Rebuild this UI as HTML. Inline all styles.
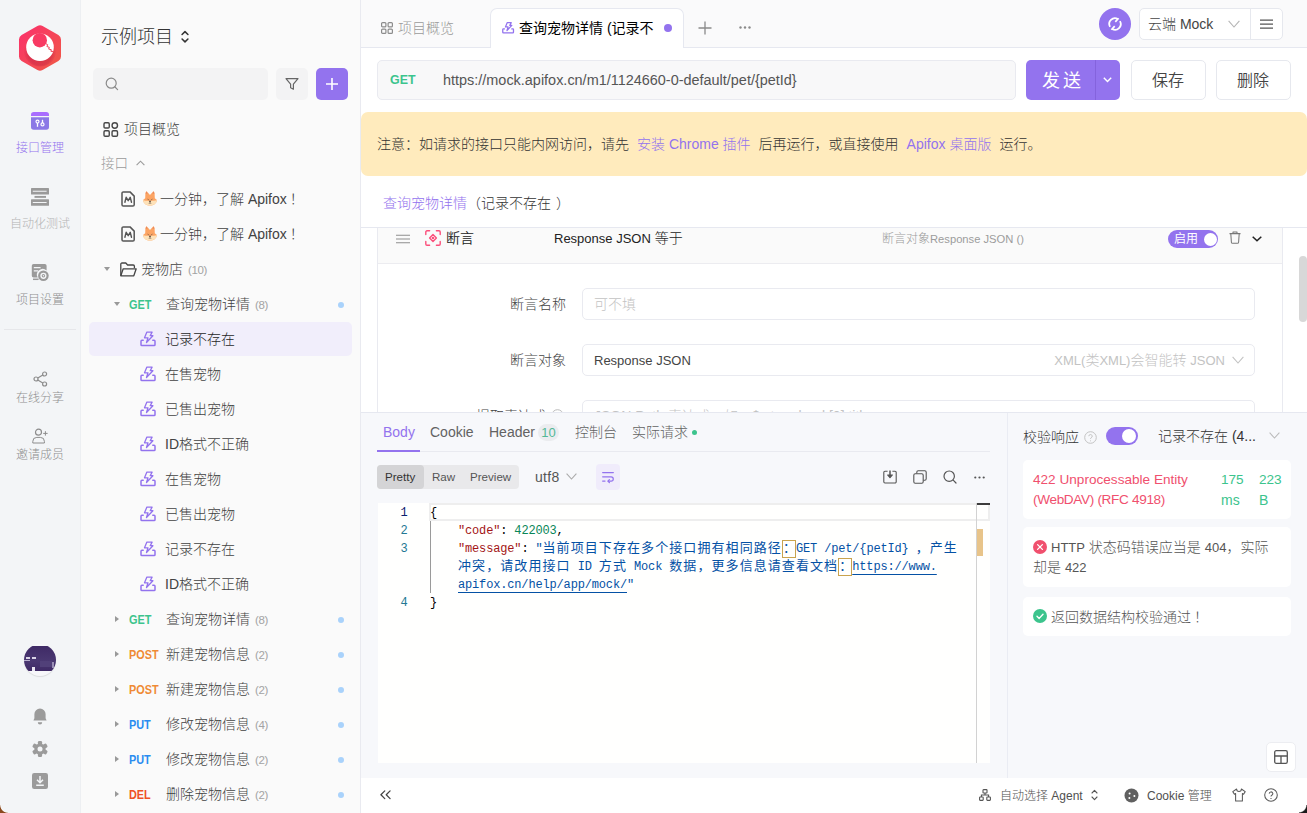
<!DOCTYPE html>
<html lang="zh-CN">
<head>
<meta charset="utf-8">
<title>Apifox - 示例项目</title>
<style>
*{box-sizing:border-box;margin:0;padding:0}
html,body{width:1307px;height:813px;overflow:hidden}
body{position:relative;background:#fff;font-family:"Liberation Sans","Noto Sans CJK SC",sans-serif;font-size:14px;font-weight:300;color:#333}
.abs{position:absolute}
.l{font-size:13px}
svg{display:block;overflow:visible}
.t{position:absolute;white-space:nowrap;line-height:20px;height:20px}
/* rail */
#rail{position:absolute;left:0;top:0;width:80px;height:813px;background:#f3f5f7}
#rail .lb{position:absolute;left:0;width:80px;text-align:center;font-size:12px;line-height:16px;color:#a9a9a9;white-space:nowrap}
#rail .ic{position:absolute}
/* sidebar */
#side{position:absolute;left:80px;top:0;width:280px;height:813px;background:#fafafa;border-left:1px solid #edeff2}
#side .row{position:absolute;left:0;width:280px;height:35px}
#side .row .t{top:7px;font-size:14px;color:#424242}
.cnt{font-size:11.500px;letter-spacing:-.4px;color:#a3a3a3;margin-left:5px}
.m{position:absolute;top:8px;left:48px;font-size:12.500px;font-weight:bold;line-height:20px;transform:scaleX(.87);transform-origin:0 50%}
.get{color:#3cc48d}.post{color:#ef8a35}.put{color:#2a8cf0}.del{color:#ef5126}
.dot{position:absolute;left:257px;top:15px;width:6px;height:6px;border-radius:50%;background:#a9d2fb}
.car{position:absolute;top:14px;width:0;height:0}
.car.r{left:34px;top:14px;border-left:4.500px solid #999;border-top:3.500px solid transparent;border-bottom:3.500px solid transparent}
.car.d{left:33px;top:15px;border-top:4.500px solid #999;border-left:3.500px solid transparent;border-right:3.500px solid transparent}
.ci{position:absolute;left:59px;top:8px}

.tb{top:422px;font-size:14px;color:#626262}
.sg{top:467px;font-size:11.600px;color:#555}
.ft{top:786px;font-size:12px;color:#505050}
.card{left:662px;width:268px;background:#fff;border-radius:5px}
#ed{font-family:"Liberation Mono","Noto Sans CJK SC",monospace;font-size:12px;font-weight:400;letter-spacing:-.16px;color:#000}
#ed .ln{margin-top:1px;position:absolute;left:0;width:29.500px;text-align:right;line-height:18px;height:18px;color:#237893}
#ed .cl{position:absolute;left:52px;line-height:18px;height:18px;white-space:pre;margin-top:1px}
#ed .k{color:#a31515}#ed .n{color:#098658}#ed .s{color:#0451a5}
#ed b{font-weight:400;font-size:13px;letter-spacing:1.080px}
#ed b.bx{display:inline-block;width:14.080px;height:18px;letter-spacing:0;border:1px solid #c9a34e;vertical-align:top;line-height:16px}
#ed u{text-decoration:underline;text-underline-offset:4px}
</style>
</head>
<body>
<div id="rail">
  <svg class="ic" style="left:17px;top:23px" width="46" height="50" viewBox="0 0 46 50">
    <defs>
      <linearGradient id="lg" x1="0" y1="0" x2="1" y2="1"><stop offset="0" stop-color="#fb2f6d"/><stop offset="1" stop-color="#ef5a45"/></linearGradient>
      <radialGradient id="sh" cx="0.5" cy="0.6" r="0.5"><stop offset="0.7" stop-color="#c0203f" stop-opacity=".45"/><stop offset="1" stop-color="#c0203f" stop-opacity="0"/></radialGradient>
    </defs>
    <path d="M20.4 2.9 a5.2 5.2 0 0 1 5.2 0 l15.8 9.1 a5.2 5.2 0 0 1 2.6 4.5 v17 a5.2 5.2 0 0 1 -2.6 4.5 l-15.8 9.1 a5.2 5.2 0 0 1 -5.2 0 l-15.8 -9.1 a5.2 5.2 0 0 1 -2.6 -4.5 v-17 a5.2 5.2 0 0 1 2.6 -4.5 z" fill="url(#lg)"/>
    <circle cx="23" cy="27" r="16.5" fill="url(#sh)"/>
    <circle cx="23" cy="24.2" r="13.8" fill="#fff"/>
    <circle cx="22.800" cy="17.200" r="7.200" fill="#f83a63"/>
    <path d="M28.500 20.500l2.200 1.200-.8 1.800 2.400.8-.6 1.800 2.600.6-.4 1.600 2.400.2" stroke="#f3445a" stroke-width="1" fill="none"/>
  </svg>
  <!-- api mgmt -->
  <svg class="ic" style="left:31px;top:112px" width="18" height="18" viewBox="0 0 18 18">
    <path d="M0 4v-1.200a2.800 2.800 0 0 1 2.800-2.800h12.400a2.800 2.800 0 0 1 2.800 2.800v1.200z" fill="#a96dff"/>
    <path d="M0 5.200h18v9.800a2.800 2.800 0 0 1-2.800 2.800h-12.400a2.800 2.800 0 0 1-2.800-2.800z" fill="#8b78e6"/>
    <circle cx="6.500" cy="9.600" r="1.500" fill="none" stroke="#fff" stroke-width="1.200"/><path d="M6.500 11v3.800" stroke="#fff" stroke-width="1.300"/>
    <circle cx="11.500" cy="12.400" r="1.500" fill="none" stroke="#fff" stroke-width="1.200"/><path d="M11.500 11v-3.200" stroke="#fff" stroke-width="1.300"/>
  </svg>
  <div class="lb" style="top:140px;color:#9373ee">接口管理</div>
  <!-- automation -->
  <svg class="ic" style="left:31px;top:188px" width="18" height="18" viewBox="0 0 18 18">
    <rect x="0" y="0" width="18" height="6.600" rx=".6" fill="#9a9a9a"/><rect x="0" y="11.200" width="18" height="6.600" rx=".6" fill="#9a9a9a"/>
    <path d="M1.800 3.300h13.800M1.800 14.500h13.800" stroke="#f3f5f7" stroke-width="1.100"/><path d="M3.500 8.900h11.500" stroke="#9a9a9a" stroke-width="1.900"/>
  </svg>
  <div class="lb" style="top:216px;color:#b4b4b4">自动化测试</div>
  <!-- settings -->
  <svg class="ic" style="left:31px;top:264px" width="18" height="18" viewBox="0 0 18 18">
    <path d="M2.600 0h11.200a1.800 1.800 0 0 1 1.800 1.800v4.600a5.800 5.800 0 0 0-8.900 7.200H2.600a1.800 1.800 0 0 1-1.800-1.800v-10a1.800 1.800 0 0 1 1.800-1.800z" fill="#9a9a9a"/>
    <path d="M2.800 3.600h6.800M2.800 6.800h4.400" stroke="#f3f5f7" stroke-width="1.300"/><path d="M2 15.300h5.600" stroke="#9a9a9a" stroke-width="1.500"/>
    <circle cx="12.400" cy="11.800" r="5.300" fill="#9a9a9a"/><circle cx="12.400" cy="11.800" r="3.100" fill="#f3f5f7"/><circle cx="12.400" cy="11.800" r="1.700" fill="#9a9a9a"/><circle cx="12.400" cy="11.800" r=".7" fill="#f3f5f7"/>
  </svg>
  <div class="lb" style="top:292px;color:#8f8f8f">项目设置</div>
  <div class="abs" style="left:4px;top:329px;width:72px;height:1px;background:#e6e7ea"></div>
  <!-- share -->
  <svg class="ic" style="left:33px;top:371px" width="15" height="16" viewBox="0 0 15 16" fill="none" stroke="#8c8c8c" stroke-width="1.2">
    <circle cx="11.6" cy="3" r="2"/><circle cx="3" cy="8" r="2"/><circle cx="11.6" cy="13" r="2"/><path d="M4.8 7 9.8 4 M4.8 9 9.8 12"/>
  </svg>
  <div class="lb" style="top:390px;color:#8f8f8f">在线分享</div>
  <!-- invite -->
  <svg class="ic" style="left:32px;top:428px" width="17" height="16" viewBox="0 0 17 16" fill="none" stroke="#8c8c8c" stroke-width="1.2">
    <circle cx="6.5" cy="4.2" r="3"/><path d="M0.8 15v-1.6a4 4 0 0 1 4-4h3.6a4 4 0 0 1 4 4V15z M13.400 3.200v4.400M11.200 5.400h4.400" stroke-width="1"/>
  </svg>
  <div class="lb" style="top:447px;color:#8f8f8f">邀请成员</div>
  <!-- avatar -->
  <div class="abs" style="left:24px;top:644px;width:32px;height:32px;border-radius:50%;overflow:hidden;background:#f7f7fa;box-shadow:0 1px 1px rgba(0,0,0,.10)">
    <div class="abs" style="left:0;top:2px;width:32px;height:25px;background:linear-gradient(#3f2a66,#4a3872 60%,#3f2a66)"></div>
    <div class="abs" style="left:2px;top:13px;width:4px;height:2px;background:#d9d3e6"></div>
    <div class="abs" style="left:8px;top:13px;width:4px;height:2px;background:#d9d3e6"></div>
    <div class="abs" style="left:0;top:16px;width:6px;height:1px;background:#b9b0cf"></div>
    <div class="abs" style="left:8px;top:23px;width:3px;height:4px;background:#e9e6f0"></div>
    <div class="abs" style="left:28px;top:18px;width:2px;height:6px;background:#9a8fb6"></div>
    <div class="abs" style="left:16px;top:17px;width:12px;height:6px;background:#514079"></div>
  </div>
  <!-- bell -->
  <svg class="ic" style="left:33px;top:708px" width="14" height="17" viewBox="0 0 14 17">
    <path d="M7 0.5a5.6 5.6 0 0 1 5.6 5.6v4.2l1 2.200H0.400l1-2.200V6.100A5.600 5.600 0 0 1 7 .5z" fill="#9b9b9b"/><path d="M4.800 14.200h4.400a2.200 2.200 0 0 1-4.400 0z" fill="#9b9b9b"/>
  </svg>
  <!-- gear -->
  <svg class="ic" style="left:32px;top:741px" width="16" height="16" viewBox="-8 -8 16 16" fill="#9b9b9b">
    <circle r="5.600"/><g><rect x="-2.100" y="-8" width="4.200" height="5" rx="1.300"/><rect x="-2.100" y="3" width="4.200" height="5" rx="1.300"/></g><g transform="rotate(60)"><rect x="-2.100" y="-8" width="4.200" height="5" rx="1.300"/><rect x="-2.100" y="3" width="4.200" height="5" rx="1.300"/></g><g transform="rotate(120)"><rect x="-2.100" y="-8" width="4.200" height="5" rx="1.300"/><rect x="-2.100" y="3" width="4.200" height="5" rx="1.300"/></g><circle r="2.500" fill="#f3f5f7"/>
  </svg>
  <!-- download -->
  <svg class="ic" style="left:32px;top:773px" width="16" height="16" viewBox="0 0 16 16">
    <rect x="0" y="0" width="16" height="16" rx="2.200" fill="#9b9b9b"/><path d="M8 3v6.2 M5 6.8l3 3 3-3 M4.2 12.2h7.600" stroke="#f3f5f7" stroke-width="1.5" fill="none"/>
  </svg>
  <div class="abs" style="left:0;top:805px;width:8px;height:8px;background:radial-gradient(circle at 8px 0,transparent 6.800px,#fafbfc 7.300px,#8b4a1f 8.200px)"></div>
</div>
<div id="side">
  <div class="t" style="left:20px;top:24px;font-size:18px;line-height:26px;height:26px;color:#333">示例项目</div>
  <svg class="abs" style="left:100px;top:30px" width="8" height="13.500" viewBox="0 0 9 15" fill="none" stroke="#333" stroke-width="1.700" stroke-linecap="round" stroke-linejoin="round"><path d="M1.2 5 4.5 1.7 7.800 5 M1.2 10 4.5 13.3 7.800 10"/></svg>
  <div class="abs" style="left:12px;top:68px;width:175px;height:32px;border-radius:5px;background:#f3f3f4"></div>
  <svg class="abs" style="left:24px;top:77px" width="14" height="14" viewBox="0 0 14 14" fill="none" stroke="#8a8a8a" stroke-width="1.2"><circle cx="6.2" cy="6.2" r="5"/><path d="M10 10l2.600 2.600" stroke-linecap="round"/></svg>
  <div class="abs" style="left:195px;top:68px;width:32px;height:32px;border-radius:5px;background:#f3f3f4"></div>
  <svg class="abs" style="left:204px;top:77px" width="14" height="14" viewBox="0 0 14 14" fill="none" stroke="#666" stroke-width="1.2" stroke-linejoin="round"><path d="M1 1.600h12l-4.600 5.600v5l-2.800-1.400v-3.600z"/></svg>
  <div class="abs" style="left:235px;top:68px;width:32px;height:32px;border-radius:5px;background:#9373ee"></div>
  <svg class="abs" style="left:244px;top:77px" width="14" height="14" viewBox="0 0 14 14" stroke="#fff" stroke-width="1.600"><path d="M7 1v12M1 7h12"/></svg>

  <div class="row" style="top:112px">
    <svg class="abs" style="left:22px;top:10px" width="15.500" height="15" viewBox="0 0 16 16" fill="none" stroke="#484848" stroke-width="1.500"><rect x=".8" y=".8" width="5.600" height="5.600" rx="1.200"/><rect x="9.400" y=".8" width="5.800" height="5.800" rx="2.900"/><rect x=".8" y="9.400" width="5.600" height="5.800" rx="1.200"/><rect x="9.400" y="9.400" width="5.800" height="5.800" rx="1.200"/></svg>
    <div class="t" style="left:43px">项目概览</div>
  </div>
  <div class="row" style="top:147px">
    <div class="t" style="left:20px;color:#9a9a9a;font-size:13.500px">接口</div>
    <svg class="abs" style="left:55px;top:13px" width="9" height="6" viewBox="0 0 9 6" fill="none" stroke="#9a9a9a" stroke-width="1.100"><path d="M0.600 5.200 4.500 1.200 8.400 5.200"/></svg>
  </div>
  <div class="row" style="top:182px">
    <svg class="abs" style="left:40px;top:9px" width="14" height="16" viewBox="0 0 14 16" fill="none" stroke="#555" stroke-width="1.500" stroke-linejoin="round"><path d="M2.300.9h6.700l4.200 4.200v8.700a1.300 1.300 0 0 1-1.300 1.300h-9.600a1.300 1.300 0 0 1-1.300-1.300v-11.600a1.300 1.300 0 0 1 1.300-1.300z"/><path d="M3.900 11.300l1.300-5 2 3.400 2-3.400 1.300 5" stroke-width="1.400" stroke-linecap="round"/></svg>
    <svg class="abs" style="left:62px;top:9px" width="14" height="15" viewBox="0 0 14 15"><path d="M2.400 1.800 3.600.3 7 4l3.400-3.700 1.200 1.500.2 5.400 2.200 1.800c-.6 3.600-3.400 5.600-7 5.600s-6.400-2-7-5.600l2.200-1.800z" fill="#fca463"/><path d="M0 9c2 .9 4.600.8 7 .8s5-.1 7-.8c-.6 3.600-3.400 5.600-7 5.600s-6.400-2-7-5.600z" fill="#fde2b9"/><path d="M3.600.3 4.600 2.800 2.700 2.400zM10.400.3 9.400 2.800l1.900-.4z" fill="#e9855a"/><path d="M4.600 8.200l1.200.7M9.400 8.200l-1.200.7M7 10v1.600l-1 1.200M7 11.600l1 1.200" stroke="#5b4a3e" stroke-width=".7" fill="none"/><circle cx="7" cy="10.300" r=".8" fill="#4a3a30"/></svg>
    <div class="t" style="left:79px">一分钟，了解 Apifox<span style="margin-left:3px">！</span></div>
  </div>
  <div class="row" style="top:217px">
    <svg class="abs" style="left:40px;top:9px" width="14" height="16" viewBox="0 0 14 16" fill="none" stroke="#555" stroke-width="1.500" stroke-linejoin="round"><path d="M2.300.9h6.700l4.200 4.200v8.700a1.300 1.300 0 0 1-1.300 1.300h-9.600a1.300 1.300 0 0 1-1.300-1.300v-11.600a1.300 1.300 0 0 1 1.300-1.300z"/><path d="M3.900 11.300l1.300-5 2 3.400 2-3.400 1.300 5" stroke-width="1.400" stroke-linecap="round"/></svg>
    <svg class="abs" style="left:62px;top:9px" width="14" height="15" viewBox="0 0 14 15"><path d="M2.400 1.800 3.600.3 7 4l3.400-3.700 1.200 1.500.2 5.400 2.200 1.800c-.6 3.600-3.400 5.600-7 5.600s-6.400-2-7-5.600l2.200-1.800z" fill="#fca463"/><path d="M0 9c2 .9 4.600.8 7 .8s5-.1 7-.8c-.6 3.600-3.400 5.600-7 5.600s-6.400-2-7-5.600z" fill="#fde2b9"/><path d="M3.600.3 4.600 2.800 2.700 2.400zM10.400.3 9.400 2.800l1.900-.4z" fill="#e9855a"/><path d="M4.600 8.200l1.200.7M9.400 8.200l-1.200.7M7 10v1.600l-1 1.200M7 11.600l1 1.200" stroke="#5b4a3e" stroke-width=".7" fill="none"/><circle cx="7" cy="10.300" r=".8" fill="#4a3a30"/></svg>
    <div class="t" style="left:79px">一分钟，了解 Apifox<span style="margin-left:3px">！</span></div>
  </div>
  <div class="row" style="top:252px">
    <div class="car d" style="left:23px"></div>
    <svg class="abs" style="left:39px;top:10px" width="17" height="15" viewBox="0 0 17 15" fill="none" stroke="#444" stroke-width="1.300" stroke-linejoin="round"><path d="M0.800 13.800v-11.600a1.200 1.200 0 0 1 1.200-1.200h3.800l1.800 2h5.600a1.200 1.200 0 0 1 1.200 1.200v1.800"/><path d="M0.800 13.800l2.400-7h13l-2.400 7z"/></svg>
    <div class="t" style="left:60px">宠物店<span class="cnt">(10)</span></div>
  </div>
  <div class="row" style="top:287px"><div class="car d"></div><div class="m get">GET</div><div class="t" style="left:85px">查询宠物详情<span class="cnt">(8)</span></div><div class="dot"></div></div>
  <div class="abs" style="left:8px;top:322px;width:263px;height:34px;border-radius:5px;background:#f1eefb"></div>
  <div class="row" style="top:322px"><svg class="ci" width="17" height="17" viewBox="0 0 17 17"><g fill="none" stroke="#9373ee" stroke-width="1.500" stroke-linejoin="round" stroke-linecap="round"><path d="M3.200 10.300h-1.300a.9.900 0 0 0-.9.900v3.500a.9.900 0 0 0 .9.900h12.200a.9.900 0 0 0 .9-.9v-3.500a.9.900 0 0 0-.9-.9h-1.300"/><path d="M6.900 2.100h5.200l-1.900 3.600h2.700l-6.400 6.800 1.500-4.700h-3.500z" stroke-width="1.300"/></g></svg><div class="t" style="left:84px;color:#1f1f1f">记录不存在</div></div>
  <div class="row" style="top:357px"><svg class="ci" width="17" height="17" viewBox="0 0 17 17"><g fill="none" stroke="#9373ee" stroke-width="1.500" stroke-linejoin="round" stroke-linecap="round"><path d="M3.200 10.300h-1.300a.9.900 0 0 0-.9.900v3.500a.9.900 0 0 0 .9.900h12.200a.9.900 0 0 0 .9-.9v-3.500a.9.900 0 0 0-.9-.9h-1.300"/><path d="M6.900 2.100h5.200l-1.900 3.600h2.700l-6.400 6.800 1.500-4.700h-3.500z" stroke-width="1.300"/></g></svg><div class="t" style="left:84px">在售宠物</div></div>
  <div class="row" style="top:392px"><svg class="ci" width="17" height="17" viewBox="0 0 17 17"><g fill="none" stroke="#9373ee" stroke-width="1.500" stroke-linejoin="round" stroke-linecap="round"><path d="M3.200 10.300h-1.300a.9.900 0 0 0-.9.900v3.500a.9.900 0 0 0 .9.900h12.200a.9.900 0 0 0 .9-.9v-3.500a.9.900 0 0 0-.9-.9h-1.300"/><path d="M6.900 2.100h5.200l-1.900 3.600h2.700l-6.400 6.800 1.500-4.700h-3.500z" stroke-width="1.300"/></g></svg><div class="t" style="left:84px">已售出宠物</div></div>
  <div class="row" style="top:427px"><svg class="ci" width="17" height="17" viewBox="0 0 17 17"><g fill="none" stroke="#9373ee" stroke-width="1.500" stroke-linejoin="round" stroke-linecap="round"><path d="M3.200 10.300h-1.300a.9.900 0 0 0-.9.900v3.500a.9.900 0 0 0 .9.900h12.200a.9.900 0 0 0 .9-.9v-3.500a.9.900 0 0 0-.9-.9h-1.300"/><path d="M6.900 2.100h5.200l-1.900 3.600h2.700l-6.400 6.800 1.500-4.700h-3.500z" stroke-width="1.300"/></g></svg><div class="t" style="left:84px">ID格式不正确</div></div>
  <div class="row" style="top:462px"><svg class="ci" width="17" height="17" viewBox="0 0 17 17"><g fill="none" stroke="#9373ee" stroke-width="1.500" stroke-linejoin="round" stroke-linecap="round"><path d="M3.200 10.300h-1.300a.9.900 0 0 0-.9.900v3.500a.9.900 0 0 0 .9.900h12.200a.9.900 0 0 0 .9-.9v-3.500a.9.900 0 0 0-.9-.9h-1.300"/><path d="M6.900 2.100h5.200l-1.900 3.600h2.700l-6.400 6.800 1.500-4.700h-3.500z" stroke-width="1.300"/></g></svg><div class="t" style="left:84px">在售宠物</div></div>
  <div class="row" style="top:497px"><svg class="ci" width="17" height="17" viewBox="0 0 17 17"><g fill="none" stroke="#9373ee" stroke-width="1.500" stroke-linejoin="round" stroke-linecap="round"><path d="M3.200 10.300h-1.300a.9.900 0 0 0-.9.900v3.500a.9.900 0 0 0 .9.900h12.200a.9.900 0 0 0 .9-.9v-3.500a.9.900 0 0 0-.9-.9h-1.300"/><path d="M6.900 2.100h5.200l-1.900 3.600h2.700l-6.400 6.800 1.500-4.700h-3.500z" stroke-width="1.300"/></g></svg><div class="t" style="left:84px">已售出宠物</div></div>
  <div class="row" style="top:532px"><svg class="ci" width="17" height="17" viewBox="0 0 17 17"><g fill="none" stroke="#9373ee" stroke-width="1.500" stroke-linejoin="round" stroke-linecap="round"><path d="M3.200 10.300h-1.300a.9.900 0 0 0-.9.900v3.500a.9.900 0 0 0 .9.900h12.200a.9.900 0 0 0 .9-.9v-3.500a.9.900 0 0 0-.9-.9h-1.300"/><path d="M6.900 2.100h5.200l-1.900 3.600h2.700l-6.400 6.800 1.500-4.700h-3.500z" stroke-width="1.300"/></g></svg><div class="t" style="left:84px">记录不存在</div></div>
  <div class="row" style="top:567px"><svg class="ci" width="17" height="17" viewBox="0 0 17 17"><g fill="none" stroke="#9373ee" stroke-width="1.500" stroke-linejoin="round" stroke-linecap="round"><path d="M3.200 10.300h-1.300a.9.900 0 0 0-.9.900v3.500a.9.900 0 0 0 .9.900h12.200a.9.900 0 0 0 .9-.9v-3.500a.9.900 0 0 0-.9-.9h-1.300"/><path d="M6.900 2.100h5.200l-1.900 3.600h2.700l-6.400 6.800 1.500-4.700h-3.500z" stroke-width="1.300"/></g></svg><div class="t" style="left:84px">ID格式不正确</div></div>
  <div class="row" style="top:602px"><div class="car r"></div><div class="m get">GET</div><div class="t" style="left:85px">查询宠物详情<span class="cnt">(8)</span></div><div class="dot"></div></div>
  <div class="row" style="top:637px"><div class="car r"></div><div class="m post">POST</div><div class="t" style="left:85px">新建宠物信息<span class="cnt">(2)</span></div><div class="dot"></div></div>
  <div class="row" style="top:672px"><div class="car r"></div><div class="m post">POST</div><div class="t" style="left:85px">新建宠物信息<span class="cnt">(2)</span></div><div class="dot"></div></div>
  <div class="row" style="top:707px"><div class="car r"></div><div class="m put">PUT</div><div class="t" style="left:85px">修改宠物信息<span class="cnt">(4)</span></div><div class="dot"></div></div>
  <div class="row" style="top:742px"><div class="car r"></div><div class="m put">PUT</div><div class="t" style="left:85px">修改宠物信息<span class="cnt">(2)</span></div><div class="dot"></div></div>
  <div class="row" style="top:777px"><div class="car r"></div><div class="m del">DEL</div><div class="t" style="left:85px">删除宠物信息<span class="cnt">(2)</span></div><div class="dot"></div></div>
</div>

<div id="main" style="position:absolute;left:360px;top:0;width:947px;height:813px;background:#fff;border-left:1px solid #e9eaf0">
<!-- coordinates inside: x_local = x_abs - 361 -->
  <!-- tab bar -->
  <div class="abs" style="left:0;top:0;width:946px;height:48px;background:#fafafb;border-bottom:1px solid #e6e8f0"></div>
  <svg class="abs" style="left:20px;top:22px" width="12" height="12" viewBox="0 0 12 12" fill="none" stroke="#8c8c8c" stroke-width="1.200"><rect x=".6" y=".6" width="4.300" height="4.300" rx="1"/><rect x="7.100" y=".6" width="4.300" height="4.300" rx="1"/><rect x=".6" y="7.100" width="4.300" height="4.300" rx="1"/><rect x="7.100" y="7.100" width="4.300" height="4.300" rx="1"/></svg>
  <div class="t" style="left:37px;top:18px;color:#9a9a9a">项目概览</div>
  <div class="abs" style="left:129px;top:8px;width:194px;height:40px;background:#fff;border:1px solid #e6e8f0;border-bottom:none;border-radius:7px 7px 0 0"></div>
  <svg class="abs" style="left:141px;top:21px" width="13" height="13" viewBox="0 0 17 17"><g fill="none" stroke="#9373ee" stroke-width="1.700" stroke-linejoin="round" stroke-linecap="round"><path d="M3.200 10.300h-1.300a.9.900 0 0 0-.9.900v3.500a.9.900 0 0 0 .9.900h12.200a.9.900 0 0 0 .9-.9v-3.500a.9.900 0 0 0-.9-.9h-1.300"/><path d="M6.900 2.100h5.200l-1.900 3.600h2.700l-6.400 6.800 1.500-4.700h-3.500z" stroke-width="1.600"/></g></svg>
  <div class="t" style="left:158px;top:18px;color:#000;font-weight:400">查询宠物详情 (记录不</div>
  <div class="abs" style="left:303px;top:24px;width:8px;height:8px;border-radius:50%;background:#9373ee"></div>
  <svg class="abs" style="left:337px;top:21px" width="14" height="14" viewBox="0 0 14 14" stroke="#8a8a8a" stroke-width="1.300"><path d="M7 .5v13M.5 7h13"/></svg>
  <svg class="abs" style="left:378px;top:26px" width="12" height="3" viewBox="0 0 12 3" fill="#8a8a8a"><circle cx="1.500" cy="1.500" r="1.200"/><circle cx="6" cy="1.500" r="1.200"/><circle cx="10.500" cy="1.500" r="1.200"/></svg>
  <!-- env area -->
  <div class="abs" style="left:738px;top:8px;width:32px;height:32px;border-radius:50%;background:#9373ee"></div>
  <svg class="abs" style="left:746px;top:16px" width="16" height="16" viewBox="0 0 16 16" fill="none" stroke="#fff" stroke-width="1.800"><path d="M10.850 3.060A5.700 5.700 0 0 0 3.060 10.850"/><path d="M5.150 12.940A5.700 5.700 0 0 0 12.940 5.150"/><path d="M11.600 2.300 8.300 5.900M4.400 13.700 7.700 10.100" stroke-width="1.700"/></svg>
  <div class="abs" style="left:778px;top:8px;width:144px;height:32px;background:#fff;border:1px solid #e6e8ee;border-radius:5px"></div>
  <div class="abs" style="left:889px;top:9px;width:1px;height:30px;background:#e6e8ee"></div>
  <div class="t" style="left:787px;top:14px;color:#444">云端 Mock</div>
  <svg class="abs" style="left:867px;top:20px" width="12" height="8" viewBox="0 0 12 8" fill="none" stroke="#b5b5b5" stroke-width="1.100"><path d="M.6.800 6 7l5.400-6.200"/></svg>
  <svg class="abs" style="left:899px;top:19px" width="13" height="10" viewBox="0 0 13 10" stroke="#555" stroke-width="1.250"><path d="M0 1h13M0 5h13M0 9h13"/></svg>
  <!-- url row -->
  <div class="abs" style="left:16px;top:60px;width:639px;height:40px;background:#f8f8f9;border:1px solid #e9eaf0;border-radius:5px"></div>
  <div class="t" style="left:29px;top:70px;color:#3cc48d;font-weight:bold;font-size:13.500px;transform:scaleX(.92);transform-origin:0 50%">GET</div>
  <div class="t" style="left:82px;top:70px;color:#555;font-size:14.450px">https://mock.apifox.cn/m1/1124660-0-default/pet/{petId}</div>
  <div class="abs" style="left:665px;top:60px;width:94px;height:40px;background:#9373ee;border-radius:5px"></div>
  <div class="abs" style="left:734px;top:60px;width:1px;height:40px;background:#8463dd"></div>
  <div class="t" style="left:681px;top:69px;color:#fff;font-weight:400;font-size:18px;line-height:24px;height:24px;letter-spacing:3px">发送</div>
  <svg class="abs" style="left:742px;top:77px" width="9" height="6" viewBox="0 0 9 6" fill="none" stroke="#fff" stroke-width="1.400"><path d="M.8.800 4.500 4.600 8.200.8"/></svg>
  <div class="abs" style="left:770px;top:60px;width:75px;height:40px;background:#fff;border:1px solid #e6e8ee;border-radius:5px"></div>
  <div class="t" style="left:791px;top:69px;color:#444;font-weight:350;font-size:16px;line-height:24px;height:24px">保存</div>
  <div class="abs" style="left:855px;top:60px;width:75px;height:40px;background:#fff;border:1px solid #e6e8ee;border-radius:5px"></div>
  <div class="t" style="left:876px;top:69px;color:#444;font-weight:350;font-size:16px;line-height:24px;height:24px">删除</div>
  <!-- banner -->
  <div class="abs" style="left:0;top:112px;width:946px;height:64px;background:#ffebbd;border-radius:7px"></div>
  <div class="t" style="left:16px;top:134px;color:#333">注意：如请求的接口只能内网访问，请先<span style="color:#9373ee;margin:0 8px">安装 Chrome 插件</span>后再运行，或直接使用<span style="color:#9373ee;margin:0 8px">Apifox 桌面版</span>运行。</div>
  <!-- breadcrumb -->
  <div class="t" style="left:22px;top:193px;color:#333"><span style="color:#9373ee">查询宠物详情</span>（记录不存在<span style="margin-left:5px">）</span></div>
  <div class="abs" style="left:0;top:227px;width:946px;height:1px;background:#e6e8f0"></div>
  <!-- assertion panel -->
  <div class="abs" style="left:16px;top:228px;width:906px;height:184px;border-left:1px solid #e9eaf0;border-right:1px solid #e9eaf0;overflow:hidden">
    <div class="abs" style="left:0;top:0;width:904px;height:36px;background:#fafafa;border-bottom:1px solid #ececf0"></div>
    <svg class="abs" style="left:18px;top:6px" width="14" height="10" viewBox="0 0 14 10" stroke="#8e8e8e" stroke-width="1.050"><path d="M0 1.200h14M0 5h14M0 8.800h14"/></svg>
    <svg class="abs" style="left:47px;top:2px" width="16" height="16" viewBox="0 0 16 16" fill="none" stroke="#fb4f7b" stroke-width="1.400" stroke-linecap="round" stroke-linejoin="round"><path d="M.8 4.600v-2.600a1.200 1.200 0 0 1 1.200-1.200h2.600M11.400.8h2.600a1.200 1.200 0 0 1 1.200 1.200v2.600M15.200 11.400v2.600a1.200 1.200 0 0 1-1.200 1.200h-2.600M4.600 15.200h-2.600a1.200 1.200 0 0 1-1.200-1.200v-2.600"/><path d="M8 4.600 11.400 8 8 11.400 4.600 8z"/><circle cx="8" cy="8" r=".6" fill="#f0506e"/></svg>
    <div class="t" style="left:68px;top:0;color:#222;font-weight:350">断言</div>
    <div class="t" style="left:176px;top:0;color:#222"><span class="l">Response JSON</span> 等于</div>
    <div class="t" style="left:504px;top:2px;color:#9c9c9c;font-size:12px;line-height:18px;height:18px">断言对象<span style="font-size:11.200px">Response JSON ()</span></div>
    <!-- toggle -->
    <div class="abs" style="left:790px;top:2px;width:50px;height:18px;border-radius:9px;background:#9373ee"></div>
    <div class="t" style="left:796px;top:2px;color:#fff;font-weight:400;font-size:12px;line-height:18px;height:18px">启用</div>
    <div class="abs" style="left:825.500px;top:4.500px;width:13px;height:13px;border-radius:50%;background:#fff"></div>
    <svg class="abs" style="left:851px;top:3px" width="12" height="13" viewBox="0 0 12 13" fill="none" stroke="#777" stroke-width="1.050" stroke-linejoin="round"><path d="M.5 2.600h11M4 2.400v-1.400h4v1.400M1.800 2.800l.6 8.400a1.200 1.200 0 0 0 1.200 1.100h4.800a1.200 1.200 0 0 0 1.200-1.100l.6-8.400"/></svg>
    <svg class="abs" style="left:874px;top:8px" width="10" height="6" viewBox="0 0 10 6" fill="none" stroke="#222" stroke-width="1.500"><path d="M.7.700 5 4.800 9.300.7"/></svg>
    <!-- row1 -->
    <div class="t" style="left:132px;top:66px;color:#444">断言名称</div>
    <div class="abs" style="left:204px;top:60px;width:673px;height:32px;border:1px solid #e9eaf0;border-radius:5px;background:#fff"></div>
    <div class="t" style="left:216px;top:66px;color:#c3c3c3">可不填</div>
    <!-- row2 -->
    <div class="t" style="left:132px;top:122px;color:#444">断言对象</div>
    <div class="abs" style="left:204px;top:116px;width:673px;height:32px;border:1px solid #e9eaf0;border-radius:5px;background:#fff"></div>
    <div class="t" style="left:216px;top:122px;color:#444"><span class="l">Response JSON</span></div>
    <div class="t" style="right:57px;top:122px;color:#c3c3c3"><span class="l">XML(</span>类<span class="l">XML)</span>会智能转 <span class="l">JSON</span></div>
    <svg class="abs" style="left:854px;top:128px" width="12" height="8" viewBox="0 0 12 8" fill="none" stroke="#c3c3c3" stroke-width="1.100"><path d="M.6.800 6 7l5.400-6.200"/></svg>
    <!-- row3 (clipped) -->
    <div class="t" style="left:98px;top:178px;color:#444">提取表达式</div>
    <svg class="abs" style="left:173px;top:181px" width="13" height="13" viewBox="0 0 13 13" fill="none" stroke="#bbb" stroke-width="1"><circle cx="6.500" cy="6.500" r="5.800"/></svg>
    <div class="abs" style="left:204px;top:172px;width:673px;height:32px;border:1px solid #e9eaf0;border-radius:5px;background:#fff"></div>
    <div class="t" style="left:216px;top:178px;color:#c3c3c3">JSON Path 表达式，如：$.store.book[0].title</div>
  </div>
  <!-- scrollbar -->
  <div class="abs" style="left:938px;top:256px;width:8px;height:66px;border-radius:4px;background:#d8d8d8"></div>
  <!-- response panel -->
  <div class="abs" style="left:0;top:412px;width:946px;height:366px;background:#f7f8fb;border-top:1px solid #e6e8f0"></div>
  <div class="abs" style="left:646px;top:413px;width:1px;height:365px;background:#eaecf3"></div>
  <div class="abs" style="left:16px;top:451px;width:613px;height:1px;background:#e9eaf0"></div>
  <div class="abs" style="left:16px;top:450px;width:43px;height:2px;background:#9373ee"></div>
  <div class="t tb" style="left:22px;color:#9373ee">Body</div>
  <div class="t tb" style="left:69px">Cookie</div>
  <div class="t tb" style="left:128px">Header</div>
  <div class="abs" style="left:177px;top:424px;width:21px;height:17px;border-radius:9px;background:#ebecef"></div>
  <div class="t" style="left:177px;top:423px;width:21px;text-align:center;font-size:13px;color:#52b896">10</div>
  <div class="t tb" style="left:214px">控制台</div>
  <div class="t tb" style="left:271px">实际请求</div>
  <div class="abs" style="left:331px;top:430px;width:5px;height:5px;border-radius:50%;background:#3cc48d"></div>
  <!-- toolbar -->
  <div class="abs" style="left:16px;top:465px;width:142px;height:24px;border-radius:4px;background:#e9e9eb"></div>
  <div class="abs" style="left:16px;top:465px;width:47px;height:24px;border-radius:4px;background:#d4d4d6"></div>
  <div class="t sg" style="left:24px;color:#333">Pretty</div>
  <div class="t sg" style="left:71px">Raw</div>
  <div class="t sg" style="left:109px">Preview</div>
  <div class="t" style="left:174px;top:467px;color:#555;letter-spacing:.3px">utf8</div>
  <svg class="abs" style="left:205px;top:473px" width="11" height="7" viewBox="0 0 11 7" fill="none" stroke="#aaa" stroke-width="1.100"><path d="M.6.700 5.500 6l4.900-5.300"/></svg>
  <div class="abs" style="left:235px;top:464px;width:24px;height:26px;border-radius:4px;background:#f0ecfb"></div>
  <svg class="abs" style="left:241px;top:471px" width="12" height="12" viewBox="0 0 13 12" fill="none" stroke="#9373ee" stroke-width="1.300" stroke-linecap="round" stroke-linejoin="round"><path d="M.7 1.200h11.600M.7 5.800h9.200a2.300 2.300 0 0 1 0 4.600h-3.200M.7 10.400h2.600"/><path d="M8 8.800 6.400 10.400 8 12"/></svg>
  <svg class="abs" style="left:522px;top:470px" width="14" height="14" viewBox="0 0 14 14" fill="none" stroke="#555" stroke-width="1.100" stroke-linejoin="round"><path d="M4.600 1.200h-2.600a1.200 1.200 0 0 0-1.200 1.200v9.400a1.200 1.200 0 0 0 1.200 1.200h10a1.200 1.200 0 0 0 1.200-1.200v-9.400a1.200 1.200 0 0 0-1.200-1.200h-2.600"/><path d="M7 .6v6.600" stroke-width="1.500"/><path d="M4.600 5l2.400 2.600 2.400-2.600z" fill="#555"/></svg>
  <svg class="abs" style="left:552px;top:470px" width="14" height="14" viewBox="0 0 14 14" fill="none" stroke="#555" stroke-width="1.100" stroke-linejoin="round"><rect x=".8" y="3.800" width="9.400" height="9.400" rx="1.400"/><path d="M3.800 3.600v-1.400a1.400 1.400 0 0 1 1.400-1.400h6.600a1.400 1.400 0 0 1 1.400 1.400v6.600a1.400 1.400 0 0 1-1.400 1.400h-1.400"/></svg>
  <svg class="abs" style="left:582px;top:470px" width="14" height="14" viewBox="0 0 14 14" fill="none" stroke="#555" stroke-width="1.200" stroke-linecap="round"><circle cx="6.200" cy="6.200" r="5.200"/><path d="M10.200 10.200l2.800 2.800"/></svg>
  <svg class="abs" style="left:613px;top:476px" width="11" height="3" viewBox="0 0 11 3" fill="#555"><circle cx="1.300" cy="1.500" r="1.100"/><circle cx="5.500" cy="1.500" r="1.100"/><circle cx="9.700" cy="1.500" r="1.100"/></svg>
  <!-- editor -->
  <div class="abs" id="ed" style="left:17px;top:503px;width:612px;height:260px;background:#fffffe;overflow:hidden">
    <div class="abs" style="left:51px;top:0;width:561px;height:18px;border:2px solid #eeeeee"></div>
    <div class="abs" style="left:52px;top:18px;width:1px;height:72px;background:#9a9a9a"></div>
    <div class="abs" style="left:598px;top:0;width:1px;height:260px;background:#d2d2d2"></div>
    <div class="abs" style="left:599px;top:0;width:13px;height:2px;background:#3c3c3c"></div>
    <div class="abs" style="left:599px;top:26px;width:6px;height:27px;background:#e8c48a"></div>
    <div class="ln" style="top:0;color:#0b216f">1</div>
    <div class="ln" style="top:18px">2</div>
    <div class="ln" style="top:36px">3</div>
    <div class="ln" style="top:90px">4</div>
    <div class="cl" style="top:0">{</div>
    <div class="cl" style="top:18px;left:80px"><span class="k">"code"</span>: <span class="n">422003</span>,</div>
    <div class="cl" style="top:36px;left:80px"><span class="k">"message"</span>: <span class="s">"<b>当前项目下存在多个接口拥有相同路径</b><b class="bx">：</b>GET /pet/{petId} <b>，产生</b></span></div>
    <div class="cl" style="top:54px;left:80px"><span class="s"><b>冲突，请改用接口</b> ID <b>方式</b> Mock <b>数据，更多信息请查看文档</b><b class="bx">：</b><u>https://www.</u></span></div>
    <div class="cl" style="top:72px;left:80px"><span class="s"><u>apifox.cn/help/app/mock/</u>"</span></div>
    <div class="cl" style="top:90px">}</div>
  </div>
  <!-- validation panel -->
  <div class="t" style="left:662px;top:427px;color:#333">校验响应</div>
  <svg class="abs" style="left:723px;top:431px" width="13" height="13" viewBox="0 0 13 13" fill="none" stroke="#c4c4c4" stroke-width="1"><circle cx="6.500" cy="6.500" r="5.800"/><path d="M4.800 5.200a1.700 1.700 0 1 1 2.400 1.600c-.5.300-.7.600-.7 1.200M6.500 9.400v.9" stroke-width="1"/></svg>
  <div class="abs" style="left:745px;top:427px;width:32px;height:18px;border-radius:9px;background:#9373ee"></div>
  <div class="abs" style="left:761px;top:429px;width:14px;height:14px;border-radius:50%;background:#fff"></div>
  <div class="t" style="left:797px;top:426px;color:#333">记录不存在 (4...</div>
  <svg class="abs" style="left:908px;top:432px" width="11" height="7" viewBox="0 0 11 7" fill="none" stroke="#bbb" stroke-width="1.100"><path d="M.6.700 5.500 6l4.900-5.300"/></svg>
  <div class="abs card" style="top:460px;height:59px"></div>
  <div class="t" style="left:672px;top:470px;color:#f0506e;font-size:13.600px">422 Unprocessable Entity</div>
  <div class="t" style="left:672px;top:490px;color:#f0506e;font-size:13.600px;letter-spacing:-.34px">(WebDAV) (RFC 4918)</div>
  <div class="t" style="left:860px;top:470px;color:#3cc48d;font-size:13.600px">175</div>
  <div class="t" style="left:860px;top:490px;color:#3cc48d">ms</div>
  <div class="t" style="left:898px;top:470px;color:#3cc48d;font-size:13.600px">223</div>
  <div class="t" style="left:898px;top:490px;color:#3cc48d">B</div>
  <div class="abs card" style="top:527px;height:60px"></div>
  <svg class="abs" style="left:672px;top:540px" width="14" height="14" viewBox="0 0 14 14"><circle cx="7" cy="7" r="7" fill="#f0506e"/><path d="M4.600 4.600l4.800 4.800M9.400 4.600l-4.800 4.800" stroke="#fff" stroke-width="1.300" stroke-linecap="round"/></svg>
  <div class="t" style="left:690px;top:537px;color:#555"><span class="l">HTTP</span> 状态码错误应当是 <span class="l">404</span>，实际</div>
  <div class="t" style="left:672px;top:557px;color:#555">却是 <span class="l">422</span></div>
  <div class="abs card" style="top:597px;height:39px"></div>
  <svg class="abs" style="left:672px;top:609px" width="14" height="14" viewBox="0 0 14 14"><circle cx="7" cy="7" r="7" fill="#3cc48d"/><path d="M4 7.200l2.200 2.200 3.800-4.200" stroke="#fff" stroke-width="1.400" fill="none" stroke-linecap="round" stroke-linejoin="round"/></svg>
  <div class="t" style="left:690px;top:607px;color:#555">返回数据结构校验通过<span style="margin-left:3px">！</span></div>
  <div class="abs" style="left:905px;top:742px;width:30px;height:30px;border-radius:5px;background:#fff;border:1px solid #ecedf1"></div>
  <svg class="abs" style="left:913px;top:750px" width="14" height="14" viewBox="0 0 14 14" fill="none" stroke="#555" stroke-width="1.300"><rect x=".7" y=".7" width="12.600" height="12.600" rx="1.500"/><path d="M.7 6h12.600M7 6v7.300"/></svg>
  <!-- footer -->
  <div class="abs" style="left:0;top:778px;width:946px;height:35px;background:#fff"></div>
  <svg class="abs" style="left:19px;top:790px" width="11" height="9.500" viewBox="0 0 12 10" fill="none" stroke="#444" stroke-width="1.400" stroke-linecap="round" stroke-linejoin="round"><path d="M5.200.8 1 5l4.200 4.200M11 .8 6.800 5 11 9.200"/></svg>
  <svg class="abs" style="left:618px;top:789px" width="12" height="12" viewBox="0 0 12 12" fill="none" stroke="#555" stroke-width="1.100"><rect x="4" y=".6" width="4" height="3.400" rx=".6"/><rect x=".6" y="8" width="3.600" height="3.400" rx=".6"/><rect x="7.800" y="8" width="3.600" height="3.400" rx=".6"/><path d="M6 4v2M2.400 8v-2h7.200v2"/></svg>
  <div class="t ft" style="left:639px">自动选择 Agent</div>
  <svg class="abs" style="left:730px;top:789px" width="7" height="12" viewBox="0 0 7 12" fill="none" stroke="#555" stroke-width="1.100" stroke-linecap="round" stroke-linejoin="round"><path d="M1 4 3.500 1.400 6 4M1 8l2.500 2.600L6 8"/></svg>
  <svg class="abs" style="left:763px;top:788px" width="15" height="15" viewBox="0 0 15 15"><circle cx="7.500" cy="7.500" r="7" fill="#606060"/><circle cx="5.600" cy="5.400" r="1" fill="#fff"/><circle cx="10.400" cy="8" r="1" fill="#fff"/><circle cx="5.400" cy="10" r="1" fill="#fff"/></svg>
  <div class="t ft" style="left:786px">Cookie 管理</div>
  <svg class="abs" style="left:871px;top:788px" width="14" height="14" viewBox="0 0 14 14" fill="none" stroke="#5a5a5a" stroke-width="1.050" stroke-linejoin="round"><path d="M4.600 1 .8 3.600l1.600 2.600 1.200-.7v7.500h6.800v-7.500l1.200.7 1.600-2.600-3.800-2.600a2.400 2.400 0 0 1-4.800 0z"/></svg>
  <svg class="abs" style="left:903px;top:788px" width="14" height="14" viewBox="0 0 14 14" fill="none" stroke="#5a5a5a" stroke-width="1.050"><circle cx="7" cy="7" r="6.300"/><path d="M5.200 5.600a1.800 1.800 0 1 1 2.600 1.700c-.6.300-.8.700-.8 1.300M7 10v.9"/></svg>
  <div class="abs" style="left:938px;top:805px;width:8px;height:8px;background:radial-gradient(circle at 0 0,transparent 6.800px,#1a1a1a 8px)"></div>

</div>

</body>
</html>
